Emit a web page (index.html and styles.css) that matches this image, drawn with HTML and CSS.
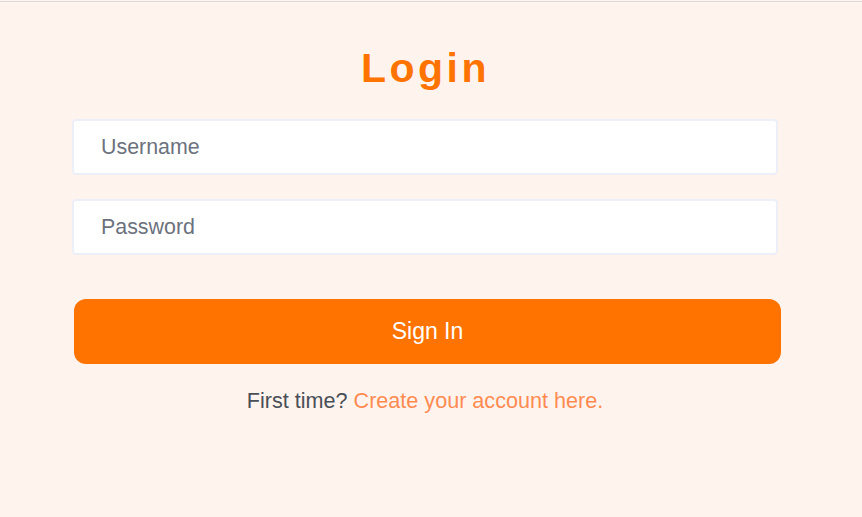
FILE: index.html
```html
<!DOCTYPE html>
<html>
<head>
<meta charset="utf-8">
<link rel="stylesheet" href="styles.css">
</head>
<body>
<main class="login">
  <h1 class="title">Login</h1>
  <form class="form">
    <input class="field" type="text" placeholder="Username">
    <input class="field" type="password" placeholder="Password">
    <button class="submit" type="button">Sign In</button>
  </form>
  <p class="note">First time? <a class="link" href="#">Create your account here.</a></p>
</main>
</body>
</html>
```
FILE: styles.css
```css
html {
  background: #fff3ee;
}
body {
  margin: 1px 0 0 0;
  border-top: 1px solid #dcd8d6;
  background: #fff3ee;
  font-family: "Liberation Sans", Arial, sans-serif;
  height: 515px;
  box-sizing: border-box;
}
.login {
  width: 709px;
  margin-left: 72px;
  display: flex;
  flex-direction: column;
}
.title {
  margin: 42px 0 0 0;
  text-align: center;
  font-size: 41px;
  line-height: 48px;
  font-weight: 700;
  letter-spacing: 3.5px;
  padding-right: 2px;
  color: #ff7300;
}
.form {
  margin-top: 27px;
  display: flex;
  flex-direction: column;
}
.field {
  width: 706px;
  height: 56px;
  box-sizing: border-box;
  border: 2px solid #edeff8;
  border-radius: 4px;
  background: #fff;
  padding: 0 0 0 27px;
  font-family: "Liberation Sans", Arial, sans-serif;
  font-size: 21.4px;
  color: #333;
  margin-bottom: 24px;
  outline: none;
}
.field::placeholder {
  color: #6c727d;
}
.submit {
  margin-top: 20px;
  margin-left: 2px;
  width: 707px;
  height: 65px;
  border: none;
  border-radius: 12px;
  background: #ff7300;
  color: #fff;
  font-family: "Liberation Sans", Arial, sans-serif;
  font-size: 23px;
}
.note {
  margin: 24px 0 0 0;
  text-align: center;
  font-size: 21.6px;
  color: #4a4f57;
  padding-right: 3px;
}
.link {
  color: #ff8b52;
  text-decoration: none;
}
```
